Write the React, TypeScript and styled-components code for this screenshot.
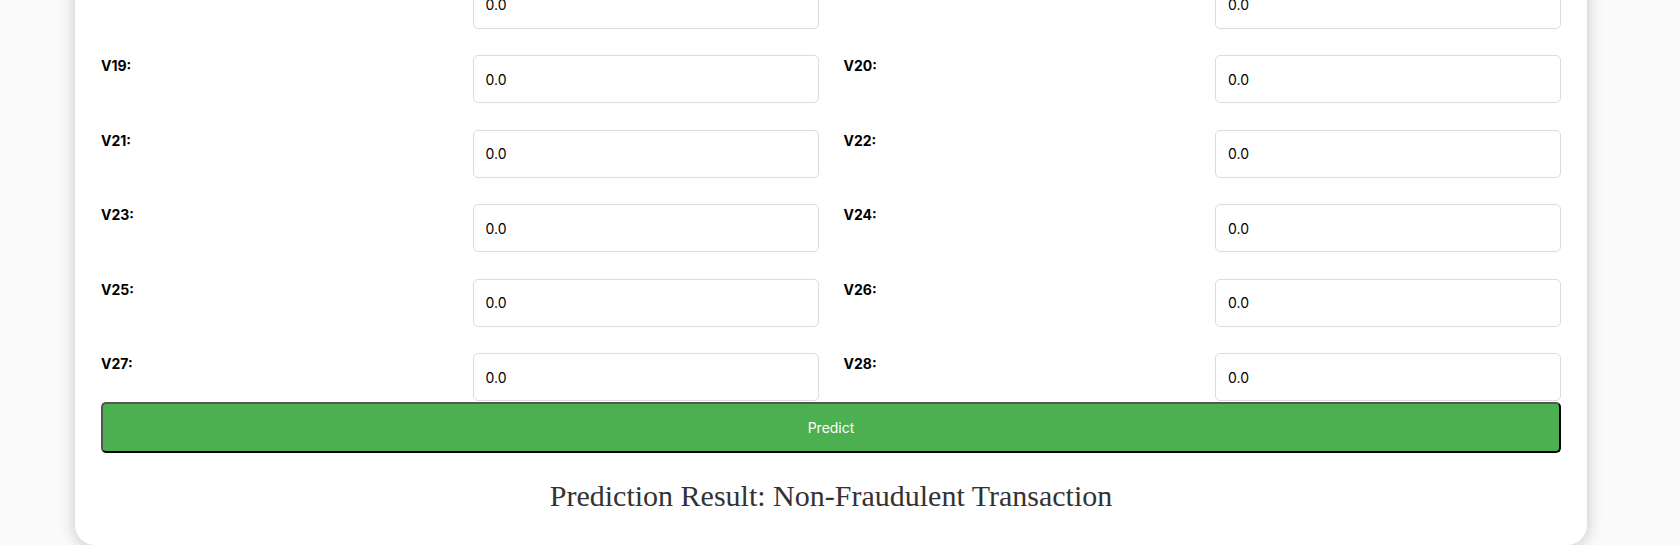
import React from "react";
import styled, { createGlobalStyle } from "styled-components";

const GlobalStyle = createGlobalStyle`
  html, body {
    margin: 0;
    padding: 0;
    background: #fafafa;
    overflow: hidden;
  }
  * { box-sizing: border-box; }
`;

const Viewport = styled.div`
  height: 545px;
  overflow: hidden;
  display: flex;
  flex-direction: column;
  justify-content: flex-end;
  padding: 0 0 0 75px;
  font-family: Inter, "Open Sans", sans-serif;
`;

const Card = styled.div`
  flex-shrink: 0;
  width: 1512px;
  background: #ffffff;
  border-radius: 0 0 20px 20px;
  box-shadow: 0 2px 16px rgba(0, 0, 0, 0.22);
  padding: 0 26px 27px 26px;
`;

const FieldGrid = styled.div`
  display: grid;
  grid-template-columns: 1fr 1fr;
  column-gap: 25px;
  row-gap: 26.5px;
`;

const Field = styled.div`
  display: grid;
  grid-template-columns: 1fr 346px;
  align-items: start;
`;

const Label = styled.label`
  font-size: 14px;
  font-weight: 700;
  line-height: 21px;
  color: #000;
`;

const Input = styled.input`
  height: 48px;
  width: 100%;
  border: 1px solid #dcdcdc;
  border-radius: 5px;
  padding: 0 12px;
  font-family: Inter, "Open Sans", sans-serif;
  font-size: 14px;
  color: #000;
  background: #fff;
  outline: none;
`;

const PredictButton = styled.button`
  display: block;
  width: 100%;
  height: 51px;
  margin-top: 1px;
  background: #4caf50;
  color: #ffffff;
  font-family: Inter, "Open Sans", sans-serif;
  font-size: 14px;
  border-width: 2px;
  border-style: solid;
  border-color: #555555 #000000 #000000 #555555;
  border-radius: 5px;
  cursor: pointer;
`;

const Result = styled.h2`
  margin: 26px 0 5px;
  text-align: center;
  font-family: "Liberation Serif", "Times New Roman", serif;
  font-weight: 400;
  font-size: 30px;
  line-height: 34px;
  color: #333333;
`;

const fields = Array.from({ length: 12 }, (_, i) => `V${17 + i}`);

export default function App() {
  return (
    <>
      <GlobalStyle />
      <Viewport>
        <Card>
          <FieldGrid>
            {fields.map((name) => (
              <Field key={name}>
                <Label htmlFor={name}>{name}:</Label>
                <Input id={name} defaultValue="0.0" />
              </Field>
            ))}
          </FieldGrid>
          <PredictButton type="button">Predict</PredictButton>
          <Result>Prediction Result: Non-Fraudulent Transaction</Result>
        </Card>
      </Viewport>
    </>
  );
}
